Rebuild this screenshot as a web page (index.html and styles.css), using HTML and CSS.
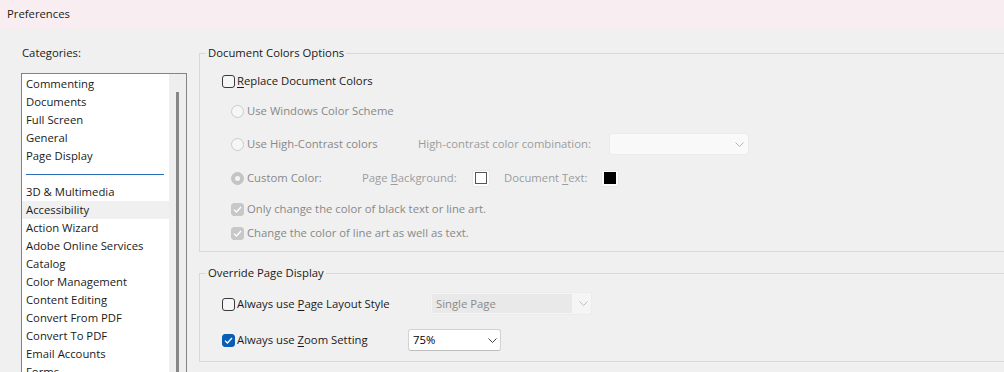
FILE: index.html
```html
<!DOCTYPE html>
<html lang="en">
<head>
<meta charset="utf-8">
<title>Preferences</title>
<link rel="stylesheet" href="styles.css">
</head>
<body>
<div class="window">
  <div class="titlebar">Preferences</div>
  <div class="content">
    <aside class="sidebar">
      <div class="cat-label">Categories:</div>
      <div class="listbox">
        <ul class="list">
          <li>Commenting</li>
          <li>Documents</li>
          <li>Full Screen</li>
          <li>General</li>
          <li>Page Display</li>
          <li class="sep"></li>
          <li>3D &amp; Multimedia</li>
          <li class="selected">Accessibility</li>
          <li>Action Wizard</li>
          <li>Adobe Online Services</li>
          <li>Catalog</li>
          <li>Color Management</li>
          <li>Content Editing</li>
          <li>Convert From PDF</li>
          <li>Convert To PDF</li>
          <li>Email Accounts</li>
          <li>Forms</li>
        </ul>
        <div class="scrollbar"><div class="thumb"></div></div>
      </div>
    </aside>

    <main class="panel">
      <fieldset class="group group-colors">
        <legend>Document Colors Options</legend>

        <div class="row r1">
          <span class="check"></span>
          <span class="lbl"><u>R</u>eplace Document Colors</span>
        </div>

        <div class="row r2 indent">
          <span class="radio"></span>
          <span class="lbl dis">Use Windows Color Scheme</span>
        </div>

        <div class="row r3 indent">
          <div class="cell w-hc">
            <span class="radio"></span>
            <span class="lbl dis">Use High-Contrast colors</span>
          </div>
          <span class="text-cell w-hclabel dim">Hi<u>g</u>h-contrast color combination:</span>
          <div class="select select-hc">
            <span class="select-text"></span>
            <svg class="chev" width="9" height="5" viewBox="0 0 9 5"><polyline points="0.5,0.5 4.5,4.5 8.5,0.5" fill="none" stroke="#b4b4b4" stroke-width="1"/></svg>
          </div>
        </div>

        <div class="row r4 indent">
          <div class="cell w-custom">
            <span class="radio radio-on"><span class="dot"></span></span>
            <span class="lbl dis">Custom Color:</span>
          </div>
          <span class="text-cell w-pagebg dim">Page <u>B</u>ackground:</span>
          <span class="swatch"><span class="swatch-in white"></span></span>
          <span class="text-cell w-doctext dim">Document <u>T</u>ext:</span>
          <span class="swatch"><span class="swatch-in black"></span></span>
        </div>

        <div class="row r5 indent">
          <span class="check check-dis">
            <svg width="9" height="7" viewBox="0 0 9 7"><polyline points="1,3.6 3.4,6 8,1" fill="none" stroke="#fff" stroke-width="1.3"/></svg>
          </span>
          <span class="lbl dis">Only change the color of black text or line art.</span>
        </div>

        <div class="row r6 indent">
          <span class="check check-dis">
            <svg width="9" height="7" viewBox="0 0 9 7"><polyline points="1,3.6 3.4,6 8,1" fill="none" stroke="#fff" stroke-width="1.3"/></svg>
          </span>
          <span class="lbl dis">Change the color of line art as well as text.</span>
        </div>
      </fieldset>

      <fieldset class="group group-override">
        <legend>Override Page Display</legend>

        <div class="row o1">
          <div class="cell w-layout">
            <span class="check"></span>
            <span class="lbl">Always use <u>P</u>age Layout Style</span>
          </div>
          <div class="select select-layout">
            <span class="select-text">Single Page</span>
            <svg class="chev" width="9" height="5" viewBox="0 0 9 5"><polyline points="0.5,0.5 4.5,4.5 8.5,0.5" fill="none" stroke="#bdbdbd" stroke-width="1"/></svg>
          </div>
        </div>

        <div class="row o2">
          <div class="cell w-zoom">
            <span class="check check-on">
              <svg width="9" height="7" viewBox="0 0 9 7"><polyline points="1,3.6 3.4,6 8,1" fill="none" stroke="#fff" stroke-width="1.3"/></svg>
            </span>
            <span class="lbl">Always use <u>Z</u>oom Setting</span>
          </div>
          <div class="select select-zoom">
            <span class="select-text">75%</span>
            <svg class="chev" width="9" height="5" viewBox="0 0 9 5"><polyline points="0.5,0.5 4.5,4.5 8.5,0.5" fill="none" stroke="#444" stroke-width="1"/></svg>
          </div>
        </div>
      </fieldset>
    </main>
  </div>
</div>
</body>
</html>
```

FILE: styles.css
```css
html, body {
  margin: 0;
  padding: 0;
  height: 100%;
  overflow: hidden;
  background: #f0f0f0;
}

body {
  font-family: "Open Sans", "Noto Sans", sans-serif;
  font-size: 11.3px;
  line-height: 16px;
  color: #1a1a1a;
}

.window {
  display: flex;
  flex-direction: column;
}

.titlebar {
  height: 29px;
  line-height: 28px;
  padding-left: 7px;
  background: #f8eef2;
  color: #1a1a1a;
}

.content {
  display: flex;
  gap: 12px;
  padding-top: 16px;
}

/* ---------- sidebar ---------- */
.sidebar {
  margin-left: 21px;
  width: 166px;
  flex: none;
}

.cat-label {
  height: 16px;
  margin-bottom: 12px;
  padding-left: 1px;
}

.listbox {
  display: flex;
  border: 1px solid #848484;
  height: 330px;
  background: #fff;
}

.list {
  list-style: none;
  margin: 0;
  padding: 1px 0 0 0;
  width: 147px;
  flex: none;
}

.list li {
  height: 18px;
  line-height: 18px;
  padding-left: 4px;
  white-space: nowrap;
}

.list li.selected {
  background: #f0f0f0;
}

.list li.sep {
  display: flex;
  align-items: center;
  padding: 0 5px 0 4px;
}

.list li.sep::after {
  content: "";
  flex: 1;
  height: 1px;
  background: #2a6cb6;
}

.scrollbar {
  width: 17px;
  flex: none;
  background: #eeeeee;
  display: flex;
  justify-content: center;
  padding-top: 18px;
  box-sizing: border-box;
}

.thumb {
  width: 3px;
  background: #878787;
  height: 100%;
  margin-left: -1px;
}

/* ---------- panel ---------- */
.panel {
  width: 830px;
  flex: none;
}

.group {
  margin: 0;
  border: 1px solid #d9d9d9;
  min-width: 0;
  padding: 0 0 0 22px;
}

.group legend {
  margin-left: -16px;
  padding: 0 2px;
  line-height: 16px;
  color: #1a1a1a;
}

.group-colors {
  padding-top: 9px;
  padding-bottom: 7px;
}

.group-override {
  margin-top: 13px;
  padding-top: 12px;
  padding-bottom: 10px;
}

.row {
  display: flex;
  align-items: center;
  height: 22px;
  white-space: nowrap;
}

.indent { padding-left: 9px; }

.r2 { margin-top: 8px; }
.r3 { margin-top: 11px; }
.r4 { margin-top: 12px; }
.r5 { margin-top: 9px; }
.r6 { margin-top: 2px; }
.o2 { margin-top: 14px; }

.cell {
  display: flex;
  align-items: center;
  flex: none;
}

.text-cell {
  display: block;
  flex: none;
  white-space: nowrap;
}

.w-hc { width: 187px; }
.w-hclabel { width: 191px; }
.w-custom { width: 131px; }
.w-pagebg { width: 110px; }
.w-doctext { width: 97px; margin-left: 14px; }
.w-layout { width: 208px; }
.w-zoom { width: 186px; }

.lbl { margin-left: 3px; }
.r1 .lbl, .group-override .lbl { margin-left: 2px; }

.dis { color: #888888; }
.dim { color: #9c9c9c; }

u { text-underline-offset: 2px; }

/* ---------- controls ---------- */
.check {
  width: 13px;
  height: 13px;
  box-sizing: border-box;
  border: 1px solid #3a3a3a;
  border-radius: 3px;
  background: #f6f6f6;
  flex: none;
  display: flex;
  align-items: center;
  justify-content: center;
}

.check-dis {
  border-color: #c8c8c8;
  background: #c8c8c8;
}

.check-on {
  border-color: #0a5cb5;
  background: #0a5cb5;
}

.radio {
  width: 13px;
  height: 13px;
  box-sizing: border-box;
  border: 1px solid #cacaca;
  border-radius: 50%;
  background: #f6f6f6;
  flex: none;
  display: flex;
  align-items: center;
  justify-content: center;
}

.radio-on {
  background: #c4c4c4;
  border-color: #c4c4c4;
}

.radio-on .dot {
  width: 5px;
  height: 5px;
  border-radius: 50%;
  background: #f4f4f4;
}

.swatch {
  width: 18px;
  height: 17px;
  box-sizing: border-box;
  background: #fcfcfc;
  border: 1px solid #e8e8e8;
  border-radius: 2px;
  flex: none;
  display: flex;
  align-items: center;
  justify-content: center;
}

.swatch-in {
  width: 12px;
  height: 12px;
  box-sizing: border-box;
}

.swatch-in.white {
  background: #fff;
  border: 1px solid #555;
}

.swatch-in.black {
  background: #000;
}

.select {
  height: 22px;
  box-sizing: border-box;
  display: flex;
  align-items: center;
  border-radius: 3px;
  flex: none;
}

.select-text {
  flex: 1;
}

.select-hc {
  width: 140px;
  background: #f9f9f9;
  border: 1px solid #ebebeb;
  padding-right: 4px;
}

.select-layout {
  width: 162px;
  height: 23px;
  margin-top: -1px;
  background: #f5f5f5;
  border: 1px solid #ececec;
  padding: 1px 3px 1px 1px;
  border-radius: 2px;
}

.select-layout .select-text {
  align-self: stretch;
  background: #e9e9e9;
  color: #8a8a8a;
  padding-left: 4px;
  line-height: 19px;
  margin-right: 7px;
}

.select-zoom {
  width: 93px;
  background: #fff;
  border: 1px solid #d2d2d2;
  border-bottom-color: #bdbdbd;
  padding: 0 3px 0 4px;
  color: #000;
}

.chev { flex: none; }
```
